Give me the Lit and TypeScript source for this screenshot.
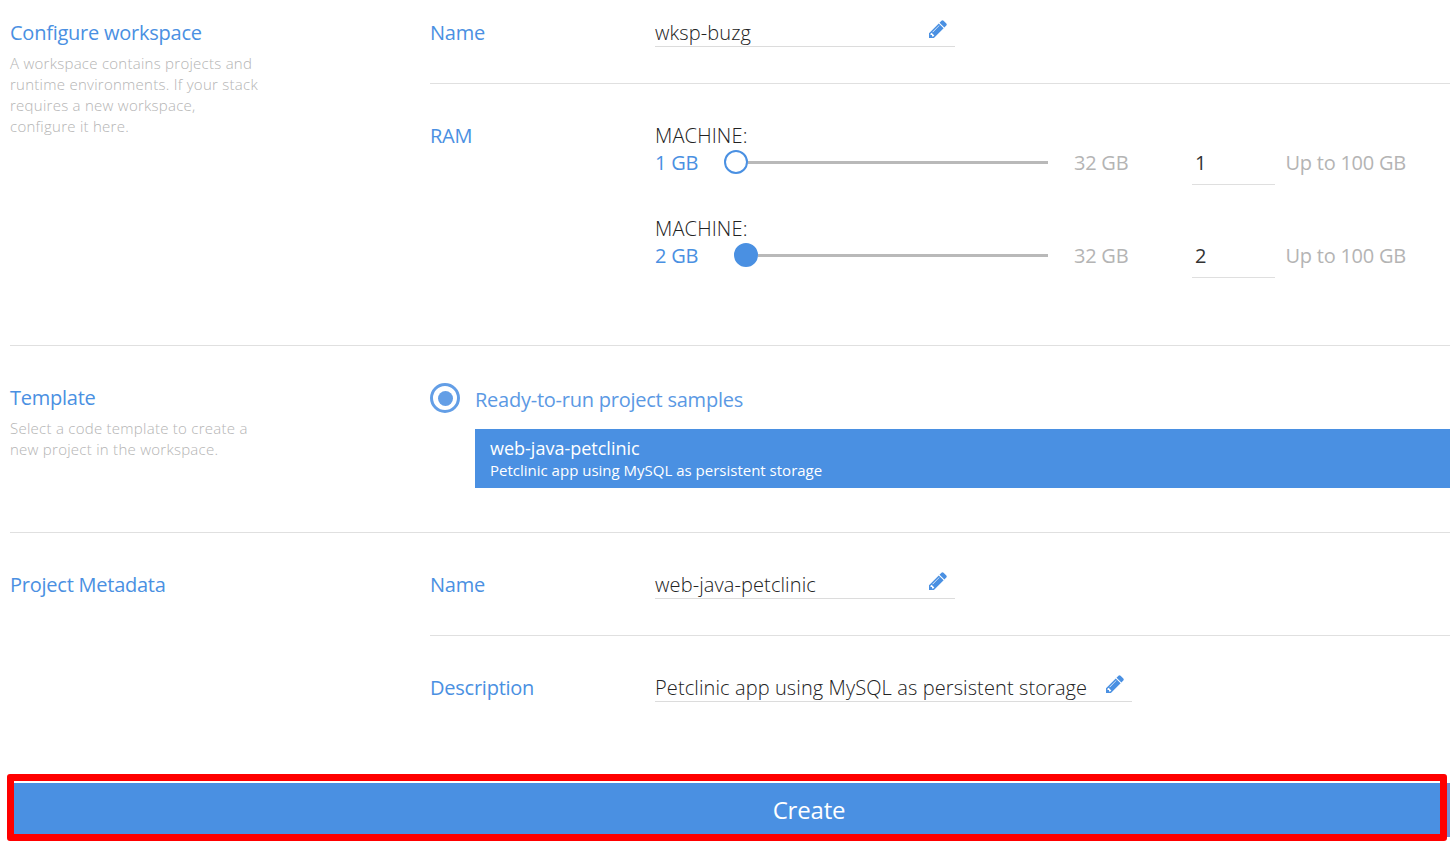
import { LitElement, html, css, svg } from "lit";
import { customElement, property } from "lit/decorators.js";

const pencil = html`<svg class="pencil" viewBox="0 128 1536 1536" width="18" height="18" aria-hidden="true">
  ${svg`<path fill="currentColor" d="M363 1536l91-91-235-235-91 91v107h128v128h107zm523-928q0-22-22-22-10 0-17 7l-542 542q-7 7-7 17 0 22 22 22 10 0 17-7l542-542q7-7 7-17zm-54-192l416 416-832 832h-416v-416zm683 96q0 53-37 90l-166 166-416-416 166-165q36-38 90-38 53 0 91 38l235 234q37 39 37 91z"/>`}
</svg>`;

@customElement("editable-text")
class EditableText extends LitElement {
  @property() value = "";

  static styles = css`
    :host {
      display: flex;
      box-sizing: border-box;
      min-width: 300px;
      height: 28px;
      border-bottom: 1px solid #dcdcdc;
      justify-content: space-between;
    }
    .value {
      font-weight: 300;
      font-size: 20px;
      line-height: 28px;
      letter-spacing: 0.1px;
      color: #222;
      white-space: nowrap;
    }
    .pencil {
      flex: none;
      color: #4a90e2;
      margin: 1px 8px 0 19px;
    }
  `;

  render() {
    return html`<span class="value">${this.value}</span>${pencil}`;
  }
}

@customElement("ram-slider")
class RamSlider extends LitElement {
  @property({ type: Number }) amount = 1;

  static styles = css`
    :host {
      display: block;
      height: 93px;
      font-size: 20px;
      line-height: 27px;
      white-space: nowrap;
    }
    .title {
      font-weight: 300;
      letter-spacing: 0.15px;
      color: #222;
    }
    .row {
      display: grid;
      grid-template-columns: 69px 324px 26px 118px 83px 11px auto;
      height: 36px;
    }
    .current {
      color: #4a90e2;
    }
    .track {
      display: flex;
      align-items: center;
      height: 25px;
    }
    .thumb {
      box-sizing: border-box;
      flex: none;
      width: 24px;
      height: 24px;
      border: 2px solid #4a90e2;
      border-radius: 50%;
      background: #4a90e2;
    }
    .thumb.min {
      background: #fff;
    }
    .bar {
      flex: 1;
      height: 3px;
      margin-top: 2px;
      background: #b9b9b9;
    }
    .limit {
      color: #b4b4b4;
    }
    .max {
      grid-column: 4;
    }
    .total {
      grid-column: 7;
      margin-left: -0.5px;
    }
    .field {
      box-sizing: border-box;
      height: 36px;
      padding-left: 3px;
      border-bottom: 1px solid #dfdfdf;
      color: #333;
    }
  `;

  render() {
    return html`
      <div class="title">MACHINE:</div>
      <div class="row">
        <span class="current">${this.amount} GB</span>
        <div class="track">
          <span class="thumb ${this.amount === 1 ? "min" : ""}" style="margin-left:${(this.amount - 1) * 10}px"></span>
          <span class="bar"></span>
        </div>
        <span class="limit max">32 GB</span>
        <div class="field">${this.amount}</div>
        <span class="limit total">Up to 100 GB</span>
      </div>
    `;
  }
}

@customElement("app-root")
class AppRoot extends LitElement {
  static styles = css`
    :host {
      display: block;
      box-sizing: border-box;
      height: 843px;
      overflow: hidden;
      background: #fff;
      font-family: "Open Sans", sans-serif;
      font-size: 20px;
      line-height: 27px;
      letter-spacing: -0.24px;
      color: #4a90e2;
    }
    .section {
      display: grid;
      grid-template-columns: 420px 1fr;
      box-sizing: border-box;
      margin-left: 10px;
      padding-top: 19px;
      border-bottom: 1px solid #e0e0e0;
    }
    .workspace {
      height: 346px;
    }
    .template {
      height: 187px;
      padding-top: 38px;
    }
    .metadata {
      height: 241px;
      padding-top: 38px;
      border-bottom: 0;
    }
    .hint {
      margin-top: 7px;
      font-size: 15px;
      line-height: 21px;
      font-weight: 300;
      letter-spacing: 0.26px;
      color: #b4b4b4;
      white-space: nowrap;
    }
    .row {
      display: grid;
      grid-template-columns: 225px 1fr;
    }
    .divided {
      box-sizing: border-box;
      height: 65px;
      margin-bottom: 38px;
      border-bottom: 1px solid #e0e0e0;
    }
    editable-text {
      justify-self: start;
    }
    .option {
      display: flex;
      gap: 15px;
      height: 45px;
    }
    .radio {
      box-sizing: border-box;
      width: 30px;
      height: 30px;
      margin-top: -1px;
      padding: 4.5px;
      border: 3px solid #639ee6;
      border-radius: 50%;
      background: #639ee6 content-box;
    }
    .option-label {
      padding-top: 2px;
      color: #5b99e4;
    }
    .sample {
      box-sizing: border-box;
      height: 59px;
      margin-left: 45px;
      padding: 7px 15px;
      background: #4a90e2;
      color: #fff;
      letter-spacing: 0;
      white-space: nowrap;
    }
    .sample-name {
      font-size: 18px;
      line-height: 24px;
    }
    .sample-text {
      font-size: 15px;
      line-height: 20px;
    }
    .highlight {
      box-sizing: border-box;
      width: 1440px;
      height: 67px;
      margin-left: 7px;
      border: 7px solid #f00;
      border-radius: 3px;
      padding-top: 2px;
    }
    .footer {
      display: flex;
    }
    .edge {
      width: 3px;
      height: 54px;
      margin-top: 9px;
      background: #6f8fd0;
    }
    .create {
      display: block;
      box-sizing: border-box;
      width: 100%;
      height: 51px;
      padding: 2px 0 0 164px;
      border: 0;
      background: #4a90e2;
      color: #fff;
      font: 24px/49px "Open Sans", sans-serif;
      letter-spacing: -0.2px;
    }
  `;

  render() {
    return html`
      <section class="section workspace">
        <div>
          <div>Configure workspace</div>
          <div class="hint">A workspace contains projects and<br />runtime environments. If your stack<br />requires a new workspace,<br />configure it here.</div>
        </div>
        <div>
          <div class="row divided">
            <span>Name</span>
            <editable-text value="wksp-buzg"></editable-text>
          </div>
          <div class="row">
            <span>RAM</span>
            <div>
              <ram-slider amount="1"></ram-slider>
              <ram-slider amount="2"></ram-slider>
            </div>
          </div>
        </div>
      </section>
      <section class="section template">
        <div>
          <div>Template</div>
          <div class="hint">Select a code template to create a<br />new project in the workspace.</div>
        </div>
        <div>
          <div class="option">
            <span class="radio"></span>
            <span class="option-label">Ready-to-run project samples</span>
          </div>
          <div class="sample">
            <div class="sample-name">web-java-petclinic</div>
            <div class="sample-text">Petclinic app using MySQL as persistent storage</div>
          </div>
        </div>
      </section>
      <section class="section metadata">
        <div>Project Metadata</div>
        <div>
          <div class="row divided">
            <span>Name</span>
            <editable-text value="web-java-petclinic"></editable-text>
          </div>
          <div class="row">
            <span>Description</span>
            <editable-text value="Petclinic app using MySQL as persistent storage"></editable-text>
          </div>
        </div>
      </section>
      <div class="footer">
        <div class="highlight"><button class="create">Create</button></div>
        <span class="edge"></span>
      </div>
    `;
  }
}
